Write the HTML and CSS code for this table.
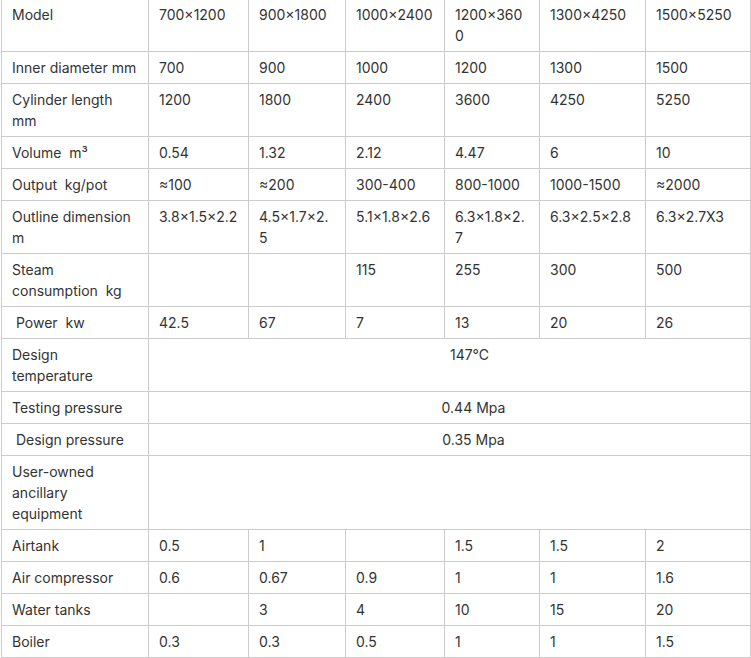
FILE: index.html
```html
<!DOCTYPE html>
<html lang="en">
<head>
<meta charset="utf-8">
<title>Specifications</title>
<link rel="stylesheet" href="styles.css">
</head>
<body>
<table class="spec">
  <colgroup>
    <col class="c1"><col class="c2"><col class="c3"><col class="c4"><col class="c5"><col class="c6"><col class="c7">
  </colgroup>
  <tbody>
    <tr><td>Model</td><td>700×1200</td><td>900×1800</td><td>1000×2400</td><td>1200×3600</td><td>1300×4250</td><td>1500×5250</td></tr>
    <tr><td>Inner diameter mm</td><td>700</td><td>900</td><td>1000</td><td>1200</td><td>1300</td><td>1500</td></tr>
    <tr><td>Cylinder length mm</td><td>1200</td><td>1800</td><td>2400</td><td>3600</td><td>4250</td><td>5250</td></tr>
    <tr><td>Volume&nbsp; m³</td><td>0.54</td><td>1.32</td><td>2.12</td><td>4.47</td><td>6</td><td>10</td></tr>
    <tr><td>Output&nbsp; kg/pot</td><td>≈100</td><td>≈200</td><td>300-400</td><td>800-1000</td><td>1000-1500</td><td>≈2000</td></tr>
    <tr><td>Outline dimension m</td><td>3.8×1.5×2.2</td><td>4.5×1.7×2.5</td><td>5.1×1.8×2.6</td><td>6.3×1.8×2.7</td><td>6.3×2.5×2.8</td><td>6.3×2.7X3</td></tr>
    <tr><td>Steam consumption&nbsp; kg</td><td></td><td></td><td>115</td><td>255</td><td>300</td><td>500</td></tr>
    <tr><td>&nbsp;Power&nbsp; kw</td><td>42.5</td><td>67</td><td>7</td><td>13</td><td>20</td><td>26</td></tr>
    <tr><td>Design temperature</td><td colspan="6" class="span span-t">147℃</td></tr>
    <tr><td>Testing pressure</td><td colspan="6" class="span">0.44 Mpa</td></tr>
    <tr><td>&nbsp;Design pressure</td><td colspan="6" class="span">0.35 Mpa</td></tr>
    <tr><td>User-owned ancillary equipment</td><td colspan="6"></td></tr>
    <tr><td>Airtank</td><td>0.5</td><td>1</td><td></td><td>1.5</td><td>1.5</td><td>2</td></tr>
    <tr><td>Air compressor</td><td>0.6</td><td>0.67</td><td>0.9</td><td>1</td><td>1</td><td>1.6</td></tr>
    <tr><td>Water tanks</td><td></td><td>3</td><td>4</td><td>10</td><td>15</td><td>20</td></tr>
    <tr><td>Boiler</td><td>0.3</td><td>0.3</td><td>0.5</td><td>1</td><td>1</td><td>1.5</td></tr>
  </tbody>
</table>
</body>
</html>
```

FILE: styles.css
```css
html, body {
  margin: 0;
  padding: 0;
  background: #fff;
}
.spec {
  margin: -2px 0 0 1px;
  width: 749px;
  table-layout: fixed;
  border-collapse: collapse;
  font-family: Inter, "Noto Sans", sans-serif;
  font-size: 14px;
  line-height: 21px;
  color: #333;
}
.spec td {
  border: 1px solid #ccc;
  padding: 5px 10px;
  vertical-align: top;
  text-align: left;
  overflow-wrap: break-word;
}
.c1 { width: 147px; }
.c2 { width: 100px; }
.c3 { width: 97px; }
.c4 { width: 99px; }
.c5 { width: 95px; }
.c6 { width: 106px; }
.c7 { width: 105px; }
.spec td.span {
  text-align: center;
  padding-left: 58px;
}
.spec td.span-t {
  padding-left: 50px;
}
```
